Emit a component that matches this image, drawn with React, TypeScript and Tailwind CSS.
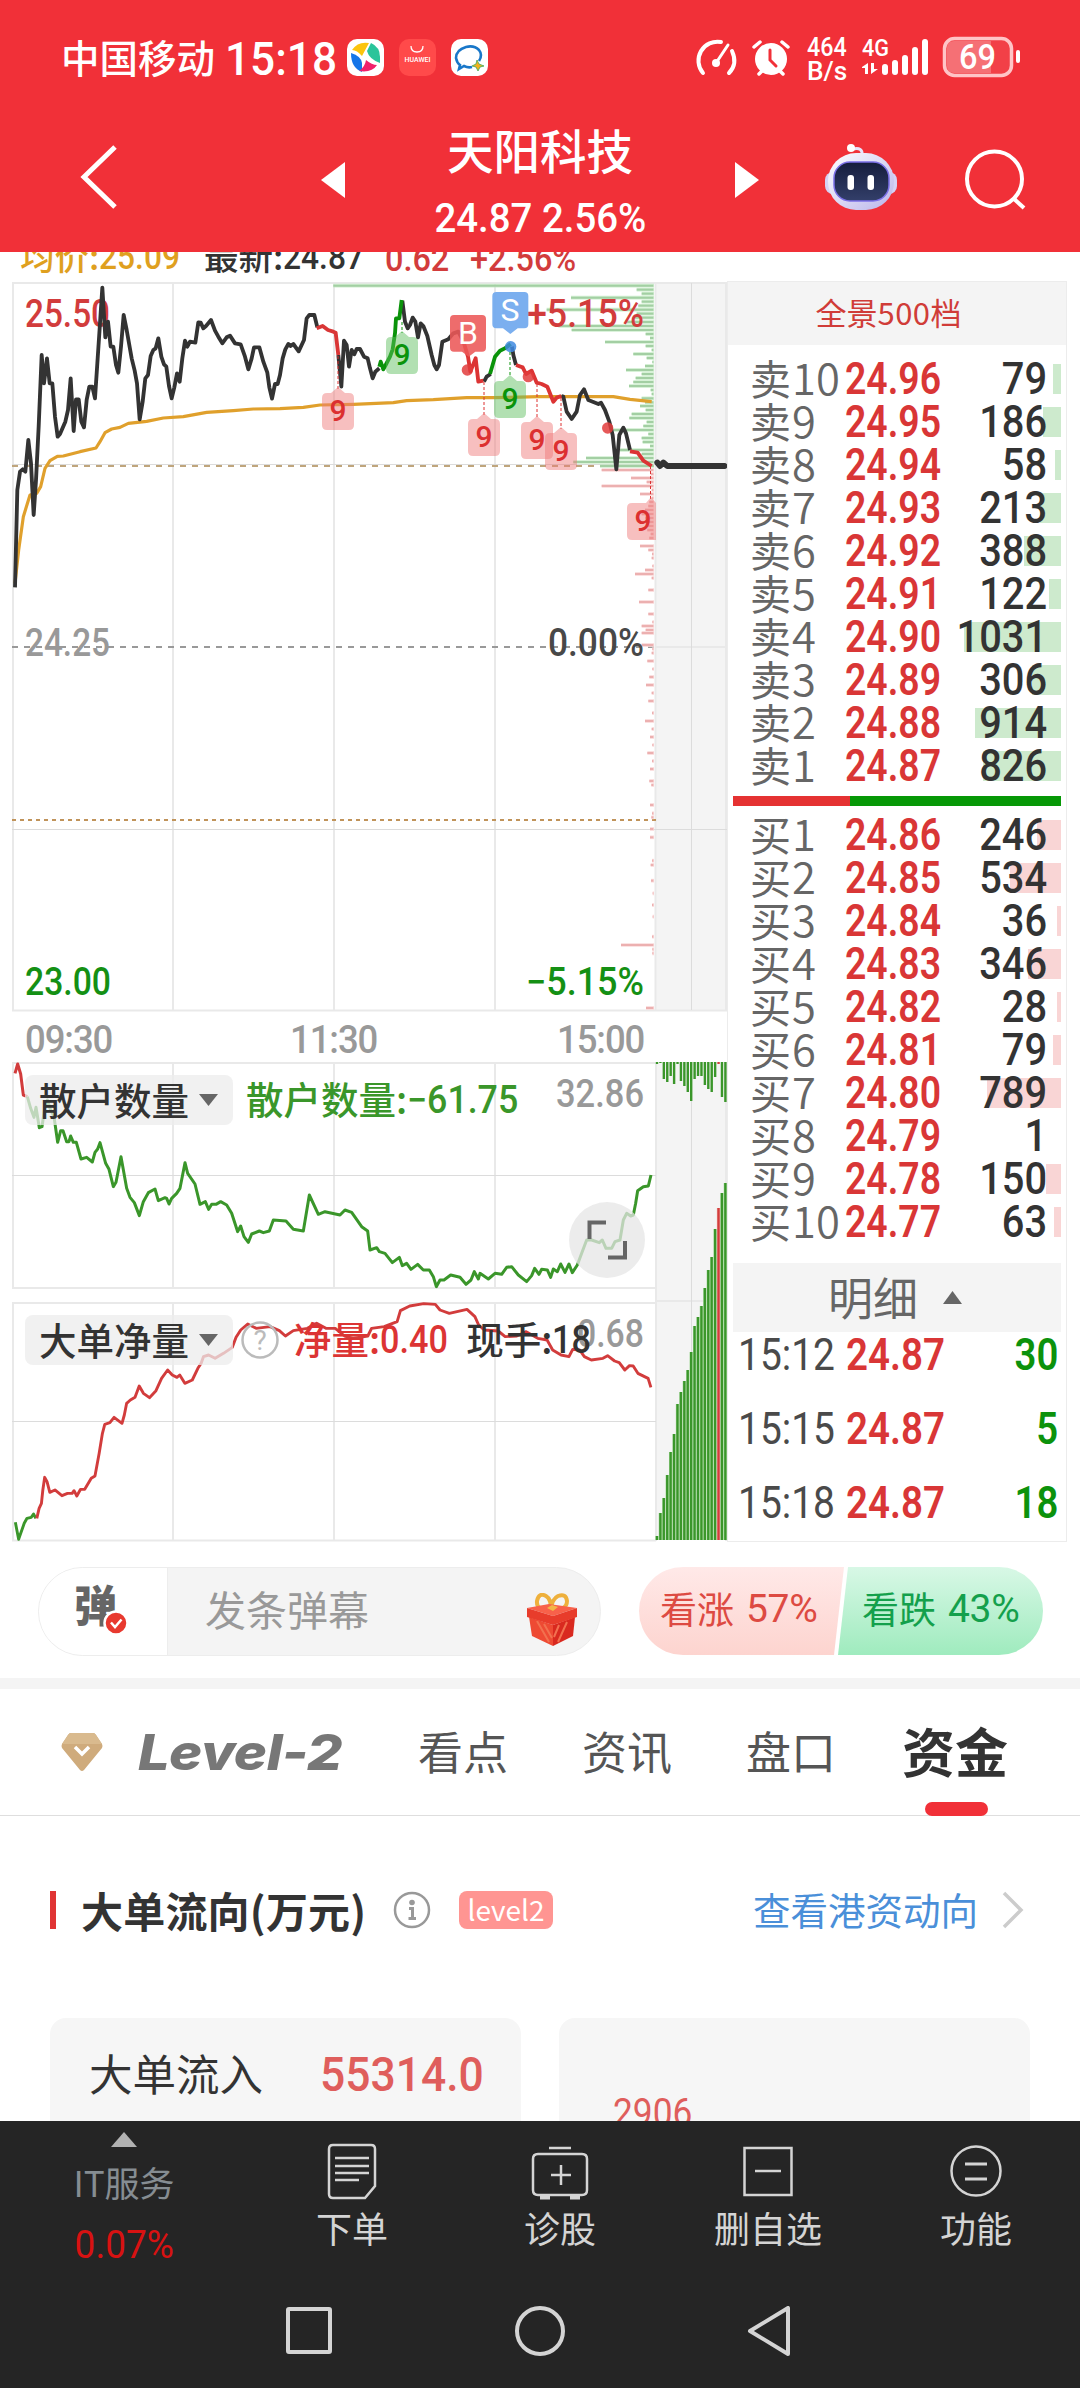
import type { ReactNode } from 'react'

const GREEN = '#3a962a'
const RED = '#d23c3c'

type Bar = [number, number]

type Level = {
  side: string
  rank: number
  price: string
  volume: number
}

const sells: Level[] = [
  { side: '卖', rank: 10, price: '24.96', volume: 79 },
  { side: '卖', rank: 9, price: '24.95', volume: 186 },
  { side: '卖', rank: 8, price: '24.94', volume: 58 },
  { side: '卖', rank: 7, price: '24.93', volume: 213 },
  { side: '卖', rank: 6, price: '24.92', volume: 388 },
  { side: '卖', rank: 5, price: '24.91', volume: 122 },
  { side: '卖', rank: 4, price: '24.90', volume: 1031 },
  { side: '卖', rank: 3, price: '24.89', volume: 306 },
  { side: '卖', rank: 2, price: '24.88', volume: 914 },
  { side: '卖', rank: 1, price: '24.87', volume: 826 },
]

const buys: Level[] = [
  { side: '买', rank: 1, price: '24.86', volume: 246 },
  { side: '买', rank: 2, price: '24.85', volume: 534 },
  { side: '买', rank: 3, price: '24.84', volume: 36 },
  { side: '买', rank: 4, price: '24.83', volume: 346 },
  { side: '买', rank: 5, price: '24.82', volume: 28 },
  { side: '买', rank: 6, price: '24.81', volume: 79 },
  { side: '买', rank: 7, price: '24.80', volume: 789 },
  { side: '买', rank: 8, price: '24.79', volume: 1 },
  { side: '买', rank: 9, price: '24.78', volume: 150 },
  { side: '买', rank: 10, price: '24.77', volume: 63 },
]

const ticks = [
  { time: '15:12', price: '24.87', volume: 30 },
  { time: '15:15', price: '24.87', volume: 5 },
  { time: '15:18', price: '24.87', volume: 18 },
]

// price distribution, [y, left edge]
const greenBars: Bar[] = [
  [107, -20], [119, 890], [131, 905], [143, 693], [155, 905], [167, 895], [179, 620], [191, 890], [203, 880], [216, 855],
  [228, 655], [240, 695], [252, 917], [264, 930], [276, 795], [288, 917], [300, 935], [312, 880], [324, 920], [336, 937],
  [348, 915], [360, 858], [372, 905], [384, 887], [396, 880], [408, 867], [420, 932], [432, 935], [445, 905], [457, 915],
  [468, 900], [480, 917], [492, 875], [504, 868], [516, 920], [528, 910], [540, 820], [552, 925], [564, 905], [576, 908],
  [588, 930], [600, 840], [612, 905], [624, 738], [636, 700], [648, 780],
]

const redBars: Bar[] = [
  [660, 785], [672, 932], [684, 873], [696, 920], [708, 785], [720, 935], [732, 900], [744, 935], [756, 928], [768, 925],
  [780, 915], [792, 905], [804, 915], [816, 927], [828, 925], [840, 922], [852, 932], [864, 928], [888, 900], [900, 925],
  [912, 936], [924, 935], [948, 937], [960, 915], [972, 885], [984, 935], [1020, 925], [1056, 897], [1092, 925],
  [1116, 937], [1128, 905], [1140, 917], [1149, 905], [1185, 905], [1197, 937], [1209, 935], [1233, 922], [1257, 937],
  [1281, 928], [1305, 918], [1329, 935], [1353, 925], [1389, 936], [1413, 915], [1437, 935], [1461, 930], [1485, 937],
  [1509, 922], [1533, 936], [1557, 930], [1593, 928], [1605, 934], [1665, 930], [1690, 936], [1702, 934], [1737, 930],
  [1762, 930], [1832, 936], [1845, 932], [1892, 933], [1930, 938], [1965, 936], [2000, 938], [2060, 936], [2085, 843],
  [2098, 937], [2110, 937], [2274, 918],
]

// after-hours bars hanging from the top, then the cumulative ones from the bottom
const downBars = [2, 1, 17, 20, 14, 22, 2, 19, 24, 30, 39, 17, 14, 14, 23, 27, 30, 15, 2, 35, 40]
const upBars = [1536, 1513, 1498, 1475, 1452, 1434, 1404, 1392, 1381, 1370, 1352, 1326, 1317, 1306, 1288, 1270, 1257, 1229, 1208, 1193, 1183]

function ChartText({ x, y, w, fill, children, size = 38 }: { x: number; y: number; w: number; fill: string; children: string; size?: number }) {
  return (
    <text x={x} y={y} textLength={w} lengthAdjust="spacingAndGlyphs" fill={fill} fontSize={size} fontWeight={500} fontFamily="Roboto, sans-serif">
      {children}
    </text>
  )
}

function Nine({ x, y, color, from }: { x: number; y: number; color: 'red' | 'green'; from: number }) {
  const fill = color === 'red' ? '#ee7a7a' : '#5fbf5f'
  const text = color === 'red' ? '#dc3030' : '#0a930a'
  return (
    <g>
      <path d={`M${x + 16} ${from}V${y - 4}`} stroke={text} strokeWidth={1} strokeDasharray="3 2" />
      <path
        d={`M${x + 5} ${y}h4l7-6 7 6h4q5 0 5 5v27q0 5-5 5h-22q-5 0-5-5v-27q0-5 5-5z`}
        fill={fill}
        fillOpacity={0.48}
      />
      <text x={x + 16} y={y + 28} textAnchor="middle" fontSize={30} fontWeight={500} fontFamily="Roboto, sans-serif" fill={text}>9</text>
    </g>
  )
}

function PriceChart() {
  return (
    <svg className="block" width="727" height="730" viewBox="0 282 727 730" fill="none">
      <rect x="656" y="283" width="70" height="727" fill="#f4f4f4" />
      <g stroke="#e9e9e9" strokeWidth="2">
        <path d="M12 283H727M12 1010.500H727M13 282V1011M173 282V1011M334 282V1011M495 282V1011M655.500 282V1011M726 282V1011" />
        <path d="M656 647H727" />
      </g>
      <path d="M12 464.500H656M12 829.500H727M691.500 283V1010" stroke="#dcdcdc" />
      <path d="M12 466H655" stroke="#bfa57c" strokeWidth="2" strokeDasharray="6 6" />
      <path d="M12 647H655" stroke="#999" strokeWidth="2" strokeDasharray="6 6" />
      <path d="M12 820H656" stroke="#c0935a" strokeWidth="2" strokeDasharray="4 4" />

      <g transform="translate(340 250) scale(0.33333)">
        {greenBars.map(([y, x]) => (
          <g key={y}>
            <path d={`M${x} ${y}H942`} stroke="#bfe8bf" strokeOpacity="0.75" strokeWidth="11" />
            <path d={`M${x} ${y}H940`} stroke="#a3cfa3" strokeWidth="6" />
          </g>
        ))}
        {redBars.map(([y, x]) => (
          <g key={y}>
            <path d={`M${x} ${y}H942`} stroke="#fadada" strokeWidth="11" />
            <path d={`M${x} ${y}H940`} stroke="#ecb0b0" strokeWidth="6" />
          </g>
        ))}
      </g>

      <ChartText x={25} y={327} w={85} fill="#d23c3c">25.50</ChartText>
      <ChartText x={25} y={656} w={85} fill="#999">24.25</ChartText>
      <ChartText x={25} y={995} w={86} fill="#149014">23.00</ChartText>
      <ChartText x={527} y={327} w={117} fill="#d23c3c">+5.15%</ChartText>
      <ChartText x={548} y={656} w={96} fill="#484848">0.00%</ChartText>
      <ChartText x={526} y={995} w={118} fill="#149014">−5.15%</ChartText>

      {/* morning session */}
      <g transform="translate(0 250) scale(0.33333)" strokeWidth="11.500" strokeLinejoin="round">
        <path
          d="M45 1000L56 900 70 800 90 735 110 730 122 710 135 655 150 632 172 619 190 618 240 605 288 594 300 575 315 548 335 537 360 532 385 520 440 514 490 504 550 500 620 487 700 482 760 477 840 476 910 472 960 465 1060 463 1180 458 1220 452 1300 449 1400 443 1480 443 1620 440 1840 440 1890 448 1955 455"
          stroke="#e0a02c"
          strokeWidth="9.500"
        />
        <path
          d="M45 1012L52 720 60 665 68 658 76 665 85 570 93 640 101 795 108 690 116 530 125 315 132 400 141 325 149 400 157 400 165 500 173 560 180 552 196 515 204 480 212 385 221 543 228 448 236 448 244 515 252 532 260 450 268 410 277 410 285 445 292 340 300 220 307 113 316 262 324 215 332 290 340 290 348 345 355 368 363 290 371 195 380 240 395 325 404 362 411 400 419 508 428 455 436 385 444 375 452 318 460 300 467 295 475 265 484 320 492 343 499 350 507 408 515 445 523 412 531 370 539 395 547 325 555 272 562 290 570 275 586 278 595 217 602 218 610 235 618 228 633 210 645 242 655 260 667 280 680 262 690 257 705 280 722 283 735 320 745 358 755 325 762 292 778 292 790 335 802 368 808 412 816 446 825 402 833 402 840 375 848 325 856 298 865 282 872 288 880 282 896 304 912 270 920 205 928 195 943 195 952 232"
          stroke="#333"
        />
        <path d="M1015 315L1024 410 1032 272 1040 285 1047 350 1055 300 1063 313 1070 297 1080 297 1092 320 1103 325 1110 355 1118 385 1126 365 1138 355" stroke="#333" />
        <path d="M950 235L968 228 984 240 1000 245 1007 248 1015 315" stroke="#d93636" />
      </g>

      {/* afternoon session */}
      <g transform="translate(340 250) scale(0.33333)" strokeWidth="11.500" strokeLinejoin="round">
        <path d="M187 152L195 215 203 235 210 225 218 203 226 215 234 262 242 220 250 228 262 258 275 315 283 345 290 358 297 345 307 275 325 268 340 250 355 245 368 270" stroke="#333" />
        <path d="M432 395L440 380 452 372M516 290L520 315 528 345M664 438L670 440 680 485 695 507 710 485 720 435 732 418 745 450 775 462 783 458 795 480 808 515 818 555 829 658 838 555 850 533 858 550 870 600" stroke="#333" />
        <path d="M118 350L122 335 130 358 137 345 150 320 158 298 165 250 168 205 178 205 185 150M450 372L465 320 480 302 495 295 512 282" stroke="#0a930a" />
        <path d="M372 280L384 320 391 365 407 325 415 395 430 392M528 345L548 352 558 372 575 362 590 398 605 402 622 410 640 455 650 443 664 438M870 604L893 608 910 632 935 648" stroke="#dc3434" />
        <circle cx="382" cy="360" r="17" fill="#e23c3c" fillOpacity="0.85" />
        <circle cx="565" cy="380" r="17" fill="#e23c3c" fillOpacity="0.85" />
        <circle cx="803" cy="534" r="17" fill="#e23c3c" fillOpacity="0.85" />
        <circle cx="512" cy="290" r="17" fill="#3f8ae0" fillOpacity="0.85" />
        <path d="M952 638L960 648 970 638 982 648H1153" stroke="#333" strokeWidth="18" strokeLinecap="round" />
        <path d="M342 195h84q12 0 12 12v86q0 12-12 12h-20l-20 15-20-15h-24q-12 0-12-12v-86q0-12 12-12z" fill="#ec5858" fillOpacity="0.88" />
        <path d="M469 126h84q12 0 12 12v85q0 12-12 12h-20l-22 17-22-17h-20q-12 0-12-12v-85q0-12 12-12z" fill="#74abee" fillOpacity="0.95" />
      </g>
      <text x="468" y="344" textAnchor="middle" fontSize="32" fontFamily="Roboto, sans-serif" fill="#fff">B</text>
      <text x="510" y="321" textAnchor="middle" fontSize="32" fontFamily="Roboto, sans-serif" fill="#fff">S</text>

      <Nine x={322} y={393} color="red" from={356} />
      <Nine x={386} y={337} color="green" from={322} />
      <Nine x={468} y={419} color="red" from={382} />
      <Nine x={494} y={381} color="green" from={352} />
      <Nine x={521} y={422} color="red" from={384} />
      <Nine x={545} y={433} color="red" from={398} />
      <path d="M650.500 466V500" stroke="#dc3030" strokeDasharray="3 2" />
      <path d="M632 503h14l5-6 5 6v37h-24q-5 0-5-5v-27q0-5 5-5z" fill="#ee7a7a" fillOpacity="0.48" />
      <text x="643" y="531" textAnchor="middle" fontSize="30" fontWeight="500" fontFamily="Roboto, sans-serif" fill="#dc3030">9</text>
    </svg>
  )
}

function IndicatorCharts() {
  return (
    <svg className="block" width="727" height="480" viewBox="0 1062 727 480" fill="none">
      <rect x="656" y="1062" width="70" height="478" fill="#f4f4f4" />
      <g stroke="#e9e9e9" strokeWidth="2">
        <path d="M12 1063H656M12 1288H656M13 1062V1289M173 1062V1289M334 1062V1289M495 1062V1289" />
        <path d="M12 1303H656M12 1540.500H656M13 1302V1541M173 1302V1541M334 1302V1541M495 1302V1541" />
        <path d="M656 1062V1541M726 1062V1541M656 1301H727" />
      </g>
      <path d="M12 1175.500H656M12 1421.500H656M691.500 1062V1540" stroke="#dcdcdc" />

      {downBars.map((h, i) => (
        <rect key={i} x={655.8 + i * 3.42} y="1062" width="2.400" height={h} fill={i === 18 ? RED : GREEN} />
      ))}
      {upBars.map((top, i) => (
        <g key={i}>
          <rect x={655.3 + i * 3.42} y={top} width="3.420" height={1540 - top} fill={i === 18 ? '#f0b0a8' : '#a9d9a0'} />
          <rect x={655.8 + i * 3.42} y={top} width="2.300" height={1540 - top} fill={i === 18 ? RED : GREEN} />
        </g>
      ))}

      <g transform="translate(0 780) scale(0.33333)" strokeWidth="9" strokeLinejoin="round">
        <path d="M45 880L53 852 62 882 70 945 82 950" stroke={RED} />
        <path
          d="M82 950L92 985 102 1012 108 982 118 1043 126 1040 134 985 142 960 150 985 162 1010 173 1087 182 1052 189 1052 200 1085 207 1085 212 1068 220 1087 229 1087 243 1137 260 1132 277 1146 285 1117 293 1107 300 1088 317 1150 327 1168 340 1220 348 1207 363 1130 380 1225 390 1252 403 1268 418 1307 430 1265 445 1238 465 1227 475 1262 495 1253 500 1255 507 1272 515 1255 530 1240 540 1225 555 1148 563 1180 585 1212 600 1273 616 1265 626 1288 635 1273 648 1273 662 1265 680 1275 695 1300 713 1355 722 1338 732 1370 745 1387 755 1362 778 1353 790 1358 808 1353 820 1320 858 1323 880 1348 910 1353 928 1245 955 1303 975 1295 1020 1305 1035 1290 1055 1297 1085 1340 1103 1353 1110 1410 1130 1403 1138 1415 1155 1420 1177 1448 1198 1432 1207 1457 1220 1450 1233 1468 1253 1453 1270 1470 1288 1470 1300 1490 1309 1520 1320 1500 1332 1500 1352 1485 1380 1492 1398 1513 1413 1500 1423 1475 1435 1497 1440 1480 1465 1497 1485 1480 1505 1483 1520 1462 1535 1460 1555 1485 1580 1505 1595 1487 1604 1465 1617 1483 1625 1468 1642 1470 1652 1492 1660 1467 1672 1475 1682 1452 1695 1477 1707 1452 1717 1478 1732 1455 1745 1420 1760 1380 1775 1380 1798 1388 1807 1380 1818 1405 1835 1405 1845 1385 1860 1380 1870 1320 1880 1300 1892 1308 1900 1305 1907 1270 1913 1232 1930 1220 1945 1218 1953 1185"
          stroke={GREEN}
        />
      </g>

      <g transform="translate(0 1260) scale(0.4656 0.33333)" strokeWidth="2.900" strokeLinejoin="round">
        <path vectorEffect="non-scaling-stroke" d="M33 787L40 838 52 790 58 775 67 772 72 762 77 775" stroke={GREEN} />
        <path
          vectorEffect="non-scaling-stroke"
          d="M79 775L84 745 89 730 92 690 96 652 101 665 107 697 118 690 133 707 145 700 155 700 159 692 165 708 173 688 182 688 196 655 204 648 213 580 220 520 225 493 236 488 245 472 262 490 267 465 272 430 280 420 290 412 299 378 308 400 321 413 335 392 347 355 360 330 370 345 380 352 386 345 397 370 413 360 425 325 432 310 437 290 448 285 462 295 480 280 499 262 507 232 517 210 532 192 550 205 580 200 600 212 613 228 630 212 660 205 680 190 700 205 720 205 740 228 758 235 790 228 798 205 825 200 853 185 860 152 880 138 910 131 935 133 945 150 965 160 1003 148 1020 170 1028 195 1040 210 1070 213 1085 230 1110 228 1130 215 1155 235 1175 240 1187 270 1205 285 1222 290 1230 268 1245 270 1255 290 1270 300 1295 295 1305 287 1320 303 1330 308 1342 330 1352 317 1360 318 1370 340 1392 355 1398 382"
          stroke={RED}
        />
      </g>

      <ChartText x={556} y={1107} w={88} fill="#999">32.86</ChartText>
      <ChartText x={577} y={1347} w={67} fill="#999">0.68</ChartText>

      <circle cx="607" cy="1240" r="38" fill="#e6e6e6" fillOpacity="0.75" />
      <path d="M589.500 1239V1222.500H606M625 1241V1257.500H608" stroke="#666" strokeWidth="4" />
    </svg>
  )
}

function IndicatorButton({ children }: { children: ReactNode }) {
  return (
    <div className="flex h-[50px] w-[208px] items-center rounded-lg bg-[#ececec]/75 pl-3.5 text-[37.5px] font-medium text-[#333]">
      <span className="-mt-[3px]">{children}</span>
      <svg className="ml-2.5" width="19" height="12" viewBox="0 0 19 12"><path d="M0 0h19l-9.500 12z" fill="#666" /></svg>
    </div>
  )
}

function Charts() {
  return (
    <div className="w-[727px] shrink-0 pt-px">
      <PriceChart />
      <div className="flex h-[50px] items-center pl-[25px] pt-[5px] font-[Roboto] text-[38px] leading-none text-[#999]">
        <span className="w-[265px] origin-left scale-x-[0.96] font-medium tracking-[-1.1px]">09:30</span>
        <span className="w-[267px] origin-left scale-x-[0.96] font-medium tracking-[-1.1px]">11:30</span>
        <span className="origin-left scale-x-[0.96] font-medium tracking-[-1.1px]">15:00</span>
      </div>
      <div className="relative">
        <IndicatorCharts />
        <div className="absolute left-[25px] top-[13px] flex items-center whitespace-nowrap leading-none">
          <IndicatorButton>散户数量</IndicatorButton>
          <span className="-mt-[5px] ml-[13px] text-[37.5px] font-medium text-[#3a962a]">散户数量:</span>
          <span className="origin-left scale-x-[0.94] font-[Roboto] text-[38px] font-medium text-[#3a962a]">−61.75</span>
        </div>
        <div className="absolute left-[25px] top-[253px] flex items-center whitespace-nowrap leading-none">
          <IndicatorButton>大单净量</IndicatorButton>
          <svg className="ml-[7px]" width="40" height="40" viewBox="0 0 40 40">
            <circle cx="20" cy="20" r="17.500" fill="none" stroke="#bbb" strokeWidth="2.500" />
            <text x="20" y="30" textAnchor="middle" fontSize="28" fontFamily="Roboto, sans-serif" fill="#bbb">?</text>
          </svg>
          <span className="-mt-[4px] ml-[14px] text-[37.5px] font-medium text-[#dc3434]">净量:</span>
          <span className="w-[86px] origin-left scale-x-[0.9] font-[Roboto] text-[38px] font-medium text-[#dc3434]">0.40</span>
          <span className="-mt-[4px] text-[37.5px] font-medium text-[#333]">现手:</span>
          <span className="origin-left scale-x-[0.9] font-[Roboto] text-[38px] font-medium text-[#333]">18</span>
        </div>
      </div>
    </div>
  )
}

function LevelRow({ level }: { level: Level }) {
  return (
    <div className="relative flex h-[43px] items-center whitespace-nowrap leading-none">
      <div
        className={level.side === '卖' ? 'absolute right-[5px] top-[7px] h-[30px] bg-[#cdeacd]' : 'absolute right-[5px] top-[7px] h-[30px] bg-[#f9d5d5]'}
        style={{ width: level.volume < 10 ? 0 : (level.volume / 1031) * 96 + 1 }}
      />
      <span className="-mt-[3px] flex w-[95px] items-center text-[41px] text-[#666]">
        {level.side}
        <span className="ml-px text-[43.500px] font-[350]">{level.rank}</span>
      </span>
      <span className="mt-px w-[97px] origin-left scale-x-[0.85] font-[Roboto] text-[44px] font-semibold text-[#d93636]">{level.price}</span>
      <span className="relative ml-auto mr-[19px] mt-px origin-right scale-x-[0.905] font-[Roboto] text-[44px] font-medium text-[#333]">{level.volume}</span>
    </div>
  )
}

function OrderBook() {
  return (
    <div className="h-[1261px] w-[340px] border border-[#ececec]">
      <div className="flex h-[63px] items-center justify-center bg-[#f4f4f4] pb-[4px] pr-[17px] text-[31px] leading-none text-[#d03c38]">
        全景<span className="tracking-[0.5px]">500</span>档
      </div>
      <div className="pl-[22px] pt-[12px]">
        {sells.map(level => <LevelRow key={level.rank} level={level} />)}
      </div>
      <div className="mx-[5px] mt-[9px] flex h-2.5">
        <div className="w-[117px] bg-[#e53232]" />
        <div className="flex-1 bg-[#069806]" />
      </div>
      <div className="pl-[22px] pt-[7px]">
        {buys.map(level => <LevelRow key={level.rank} level={level} />)}
      </div>
      <div className="mx-[5px] mt-5 flex h-[69px] items-center bg-[#f4f4f4] pl-[95px] text-[45px] leading-none text-[#666]">
        <span className="-mt-[2px]">明细</span>
        <svg className="ml-[25px]" width="19" height="13" viewBox="0 0 19 13"><path d="M9.500 0L19 13H0z" fill="#666" /></svg>
      </div>
      <div className="flex flex-col gap-8 pl-2.5 pr-2 pt-[2px]">
        {ticks.map(tick => (
          <div key={tick.time} className="flex h-[42px] items-center font-[Roboto] text-[44px] leading-none">
            <span className="w-[108px] origin-left scale-x-[0.885] text-[#4a4a4a]">{tick.time}</span>
            <span className="origin-left scale-x-[0.875] font-semibold text-[#d93636]">{tick.price}</span>
            <span className="ml-auto origin-right scale-x-[0.87] font-semibold text-[#0c920c]">{tick.volume}</span>
          </div>
        ))}
      </div>
    </div>
  )
}

function StatusBar() {
  return (
    <div className="flex h-[115px] items-center whitespace-nowrap pl-[61px] leading-none">
      <span className="-mt-[2px] text-[38.5px] font-medium">中国移动</span>
      <span className="ml-[10px] mt-[3px] w-[122px] origin-left scale-x-[0.96] font-[Roboto] text-[46px] font-medium">15:18</span>
      <svg width="141" height="37" viewBox="0 0 141 37">
        <rect width="37" height="37" rx="10" fill="#fff" />
        <path d="M5 11Q11 2 22 4L15 17Q10 11 5 11z" fill="#fcc40d" />
        <path d="M24 4Q33 8 33 18L33 24Q22 20 20 12z" fill="#2bc49a" />
        <path d="M4 14Q14 17 15 24L15 33Q4 29 4 14z" fill="#1575e8" />
        <path d="M30 26Q25 34 12 32Q18 28 19 21Q25 26 30 26z" fill="#f0206a" />
        <rect x="52" width="37" height="37" rx="10" fill="#ff4a4a" />
        <path d="M64 7q0 6 6 6t6-6" fill="none" stroke="#fff" strokeWidth="1.300" />
        <text x="70.500" y="23" textAnchor="middle" fontSize="7" fontWeight="500" fontFamily="Roboto, sans-serif" fill="#fff">HUAWEI</text>
        <rect x="104" width="37" height="37" rx="10" fill="#fff" />
        <path d="M132 22Q136 16 132 11Q127 6 119 8Q109 11 109 19Q110 24 113 26L112 30L117 27Q121 29 125 28" fill="none" stroke="#1977c9" strokeWidth="2.600" />
        <path d="M130 21l2 4 5 2-4 1-2 4-2-4-4-1 4-2z" fill="#f2b01c" stroke="#3aa85a" strokeWidth="0.800" />
      </svg>
      <svg className="ml-[206px]" width="96" height="40" viewBox="0 0 96 40" fill="none" stroke="#fff" strokeWidth="4" strokeLinecap="round">
        <path d="M9 35A19 19 0 0 1 27 4M38 13Q44 26 35 35" />
        <path d="M34 7L22 25" strokeWidth="3" />
        <circle cx="22" cy="25" r="4" fill="#fff" stroke="none" />
        <circle cx="77" cy="21" r="16" fill="#fff" stroke="none" />
        <path d="M60 9L66 4M88 4L94 9M65 36L68 33M89 36L86 33" strokeWidth="3.500" />
        <path d="M76 12V22L82 28" stroke="#f13038" strokeWidth="3" />
      </svg>
      <div className="ml-[17px] mt-[4px] flex w-[55px] flex-col items-start font-[Roboto] text-[25px] font-medium leading-[24px]">
        <span className="origin-left scale-x-[0.93]">464</span>
        <span className="origin-left scale-x-[1.05]">B/s</span>
      </div>
      <svg width="160" height="44" viewBox="0 0 160 44" fill="#fff">
        <text x="0" y="20" fontSize="24" fontWeight="500" textLength="27" lengthAdjust="spacingAndGlyphs" fontFamily="Roboto, sans-serif">4G</text>
        <path d="M0 31l6-4v11H3v-6H0zM9 27h3v6h4l-7 5z" />
        <rect x="20" y="28" width="6" height="11" rx="3" />
        <rect x="30" y="24" width="6" height="15" rx="3" />
        <rect x="40" y="19" width="6" height="20" rx="3" />
        <rect x="50" y="11" width="6" height="28" rx="3" />
        <rect x="60" y="3" width="6" height="36" rx="3" />
        <rect x="82.500" y="2.500" width="67" height="37" rx="10" fill="#fff" fillOpacity="0.08" stroke="#ffc4c6" strokeWidth="3.500" />
        <path d="M92 5H129V37H92Q85 37 85 30V12Q85 5 92 5z" fillOpacity="0.25" />
        <rect x="154" y="14" width="4" height="13" rx="2" />
        <text x="97" y="33" textLength="37" lengthAdjust="spacingAndGlyphs" fontSize="35" fontWeight="500" fontFamily="Roboto, sans-serif">69</text>
      </svg>
    </div>
  )
}

function Header() {
  return (
    <header className="h-[252px] bg-[#f13038] text-white">
      <StatusBar />
      <div className="flex h-[137px]">
        <svg width="430" height="137" viewBox="0 115 430 137">
          <path d="M115 147L84 177L115 207" fill="none" stroke="#fff" strokeWidth="5" />
          <path d="M345 162V198L321 180z" fill="#fff" />
        </svg>
        <div className="flex w-[220px] flex-col items-center whitespace-nowrap leading-none">
          <span className="mt-[11px] text-[46.5px] font-medium">天阳科技</span>
          <span className="mt-[26px] scale-x-[0.96] font-[Roboto] text-[40px] font-medium">24.87 2.56%</span>
        </div>
        <svg width="430" height="137" viewBox="650 115 430 137">
          <defs>
            <linearGradient id="bot" x1="0" y1="0" x2="1" y2="1">
              <stop offset="0" stopColor="#fff" />
              <stop offset="1" stopColor="#b9b4ea" />
            </linearGradient>
            <linearGradient id="face" x1="0" y1="0" x2="0" y2="1">
              <stop offset="0" stopColor="#151d3c" />
              <stop offset="1" stopColor="#333f6a" />
            </linearGradient>
          </defs>
          <path d="M735 162V198L759 180z" fill="#fff" />
          <path d="M862 155Q863 147 853 149" fill="none" stroke="#e8e4fb" strokeWidth="3" />
          <circle cx="851" cy="148" r="4" fill="#fff" />
          <rect x="825" y="172" width="72" height="22" rx="8" fill="#d6d2f5" />
          <rect x="828" y="153" width="66" height="57" rx="28" fill="url(#bot)" />
          <rect x="834" y="162" width="55" height="39" rx="16" fill="url(#face)" stroke="#7a6fe6" strokeWidth="1.500" />
          <rect x="847.500" y="175" width="6.500" height="15" rx="3" fill="#fff" />
          <rect x="867.500" y="175" width="6.500" height="15" rx="3" fill="#fff" />
          <circle cx="994.500" cy="179" r="27.500" fill="none" stroke="#fff" strokeWidth="4" />
          <path d="M1013 198L1024 208" stroke="#fff" strokeWidth="4" />
        </svg>
      </div>
    </header>
  )
}

function Gift() {
  return (
    <svg width="52" height="54" viewBox="0 0 52 54">
      <path d="M25 16Q10 18 11 8Q13 -1 20 3Q25 6 25 16Q26 6 32 3Q40 0 41 8Q41 18 25 16z" fill="none" stroke="#eeb03c" strokeWidth="4" />
      <path d="M3 24L27 32V53L6 43z" fill="#ee4a33" />
      <path d="M49 24L27 32V53L47 43z" fill="#d9291f" />
      <path d="M11 28l12 21M18 31l8 14M33 32l-5 12M41 29l-9 20" stroke="#f2704f" strokeWidth="2" />
      <path d="M1 15L23 11L51 15L27 23z" fill="#f8614a" />
      <path d="M1 15L27 23V32L1 24zM51 15L27 23V32L51 24z" fill="#e83c2b" />
      <path d="M21 15l5-3 6 2-5 4z" fill="#f3b548" />
    </svg>
  )
}

function DanmuBar() {
  return (
    <div className="flex h-[136px] items-start whitespace-nowrap pl-[38px] pt-[25px] leading-none">
      <div className="flex h-[89px] w-[563px] overflow-hidden rounded-full border border-[#ededed] bg-[#f4f4f4]">
        <div className="relative w-[129px] border-r border-[#ededed] bg-white pl-[35px] pt-[14px] text-[43px] font-black text-[#666]">
          弹
          <svg className="absolute left-[64px] top-[42px]" width="26" height="26" viewBox="0 0 26 26">
            <circle cx="13" cy="13" r="11.500" fill="#e8392f" stroke="#fff" strokeWidth="2.500" />
            <path d="M8 12.500L12 17L18.500 9.500" fill="none" stroke="#fff" strokeWidth="2.500" />
          </svg>
        </div>
        <span className="pl-[37px] pt-[20px] text-[41px] text-[#999]">发条弹幕</span>
        <div className="ml-auto mr-[22px] pt-[25px]"><Gift /></div>
      </div>
      <div className="relative ml-[38px] flex h-[88px] w-[404px]">
        <svg className="absolute inset-0" width="404" height="88" viewBox="0 0 404 88">
          <defs>
            <linearGradient id="up" x1="0" y1="0" x2="0" y2="1">
              <stop offset="0" stopColor="#ffe9e8" />
              <stop offset="1" stopColor="#fdd4cf" />
            </linearGradient>
            <linearGradient id="down" x1="0" y1="0" x2="0" y2="1">
              <stop offset="0" stopColor="#d8f8e6" />
              <stop offset="1" stopColor="#9febbe" />
            </linearGradient>
          </defs>
          <path d="M44 0H205L195 88H44A44 44 0 0 1 44 0z" fill="url(#up)" />
          <path d="M209 0H360A44 44 0 0 1 360 88H199z" fill="url(#down)" />
        </svg>
        <span className="relative flex w-[202px] items-center pb-1 pl-[21px] text-[37px] text-[#dd4a42]">
          <span className="-mt-[2px]">看涨</span>
          <span className="ml-3 origin-left font-[Roboto] text-[39px] tracking-[-0.3px]">57%</span>
        </span>
        <span className="relative flex items-center pb-1 pl-[21px] text-[37px] text-[#14a04c]">
          <span className="-mt-[2px]">看跌</span>
          <span className="ml-3 origin-left font-[Roboto] text-[39px] tracking-[-0.3px]">43%</span>
        </span>
      </div>
    </div>
  )
}

function Tabs() {
  return (
    <div className="flex h-[127px] items-center whitespace-nowrap border-b border-[#dedede] pl-[60px] text-[45px] leading-none text-[#555]">
      <svg width="44" height="40" viewBox="0 0 44 40">
        <path d="M11 1H33Q35 1 36 3L42 12Q43 14 42 16L24 38Q22 40 20 38L2 16Q1 14 2 12L8 3Q9 1 11 1z" fill="#cfab7c" />
        <path d="M2 12L8 3Q9 1 11 1H33Q35 1 36 3L42 12z" fill="#d9ba8e" />
        <path d="M15 15L22 22L29 15" fill="none" stroke="#fff" strokeWidth="3.500" />
      </svg>
      <span className="ml-[34px] w-[280px] origin-left scale-x-[1.12] font-[Inter] text-[50px] font-extrabold italic tracking-[-0.5px] text-[#777]">Level-2</span>
      <span className="-mt-[3px] w-[164px]">看点</span>
      <span className="-mt-[3px] w-[164px]">资讯</span>
      <span className="-mt-[3px] w-[156px]">盘口</span>
      <span className="relative flex h-full items-center pb-[3px] text-[53px] font-bold text-[#333]">
        资金
        <span className="absolute bottom-[-1px] left-[23px] h-3.5 w-[63px] rounded-full bg-[#f13038]" />
      </span>
    </div>
  )
}

function FlowSection() {
  return (
    <section className="h-[305px] overflow-hidden px-[50px] pt-[75px] leading-none">
      <div className="flex h-[38px] items-center whitespace-nowrap">
        <div className="h-[38px] w-1.5 bg-[#e03434]" />
        <span className="-mt-px ml-[25px] w-[287px] text-[42px] font-bold tracking-[0.2px] text-[#333]">大单流向(万元)</span>
        <svg className="ml-[25px]" width="38" height="38" viewBox="0 0 38 38" fill="none" stroke="#999">
          <circle cx="19" cy="19" r="17" strokeWidth="2.500" />
          <circle cx="19" cy="11.500" r="2.800" fill="#999" stroke="none" />
          <path d="M16 17.500H19.500V27M15.500 27.500H23" strokeWidth="3" />
        </svg>
        <span className="ml-[28px] flex h-[38px] w-[94px] items-center justify-center rounded-lg bg-[#ff9592] text-[28px] text-white">
          <span className="-mt-[3px]">level2</span>
        </span>
        <span className="-mt-[2px] ml-auto text-[37.5px] text-[#4a8fd9]">查看港资动向</span>
        <svg className="ml-[24px] mr-1.5" width="22" height="38" viewBox="0 0 22 38"><path d="M2 2L19 19L2 36" fill="none" stroke="#ccc" strokeWidth="3.500" /></svg>
      </div>
      <div className="mt-[89px] flex gap-[38px]">
        <div className="flex h-[160px] w-[471px] whitespace-nowrap rounded-2xl bg-[#f6f6f6] pl-[39px] pt-[33px]">
          <span className="w-[231px] text-[43.500px] text-[#333]">大单流入</span>
          <span className="origin-left scale-x-[0.925] font-[Roboto] text-[48px] font-medium text-[#df5e5c]">55314.0</span>
        </div>
        <div className="h-[160px] w-[471px] rounded-2xl bg-[#f6f6f6] pl-[54px] pt-[76px]">
          <span className="inline-block origin-left scale-x-[0.93] font-[Roboto] text-[38px] text-[#df5e5c]">2906</span>
        </div>
      </div>
    </section>
  )
}

function NavItem({ label, children }: { label: string; children: ReactNode }) {
  return (
    <div className="flex w-[208px] flex-col items-center pt-[19px]">
      <svg width="62" height="62" viewBox="0 0 62 62" fill="none" stroke="#d4d4d4" strokeWidth="2.500">
        {children}
      </svg>
      <span className="mt-[7px] text-[36px] text-[#d4d4d4]">{label}</span>
    </div>
  )
}

function BottomNav() {
  return (
    <nav className="h-[267px] bg-[#252525] leading-none">
      <div className="flex h-[150px]">
        <div className="flex w-[248px] flex-col items-center pt-[11px]">
          <svg width="26" height="15" viewBox="0 0 26 15"><path d="M13 0L26 15H0z" fill="#b2b2b2" /></svg>
          <span className="mt-[17px] text-[35px] text-[#868d92]">IT服务</span>
          <span className="mt-[27px] scale-x-[0.95] font-[Roboto] text-[39px] text-[#d81212]">0.07%</span>
        </div>
        <NavItem label="下单">
          <path d="M12 5H50Q54 5 54 9V46L44 58H12Q8 58 8 54V9Q8 5 12 5zM14 18H48M14 26H48M14 33H48M14 40H38" />
        </NavItem>
        <NavItem label="诊股">
          <path d="M9 14H53Q58 14 58 19V50Q58 55 53 55H9Q4 55 4 50V19Q4 14 9 14z" />
          <path d="M20 8H42M22 35H42M32 25V45" />
          <path d="M11 57.500H21M41 57.500H51" strokeWidth="4" />
        </NavItem>
        <NavItem label="删自选">
          <path d="M7.500 8H54.500V55H7.500zM18 31H44" />
        </NavItem>
        <NavItem label="功能">
          <circle cx="31" cy="31" r="24.500" />
          <path d="M20 24H42M20 39H42" strokeWidth="3" />
        </NavItem>
      </div>
      <div className="flex h-[117px] justify-center pt-[35px]">
        <svg width="520" height="50" viewBox="280 2306 520 50" fill="none" stroke="#d4d4d4" strokeWidth="4" strokeLinejoin="round">
          <rect x="288" y="2309" width="42" height="43" rx="1" />
          <circle cx="540" cy="2331" r="23" />
          <path d="M788 2308V2354L750 2331z" />
        </svg>
      </div>
    </nav>
  )
}

export default function App() {
  return (
    <div className="h-[2388px] w-[1080px] overflow-hidden bg-white font-['Noto_Sans_CJK_SC',sans-serif]">
      <Header />
      <div className="flex h-[29px] items-end overflow-hidden whitespace-nowrap pl-[20px] text-[34.500px] font-medium leading-none">
        <span className="mb-[7px] flex w-[184px] items-center text-[#dfa01f]">均价:<span className="mt-1 origin-left scale-x-[0.92] font-[Roboto]">25.09</span></span>
        <span className="mb-[7px] flex w-[181px] items-center text-[#333]">最新:<span className="mt-1 origin-left scale-x-[0.92] font-[Roboto]">24.87</span></span>
        <span className="mb-[5px] w-[85px] origin-left scale-x-[0.94] font-[Roboto] text-[#d23c3c]">0.62</span>
        <span className="mb-[5px] origin-left scale-x-[0.94] font-[Roboto] text-[#d23c3c]">+2.56%</span>
      </div>
      <div className="flex h-[1261px]">
        <Charts />
        <OrderBook />
      </div>
      <DanmuBar />
      <div className="h-[11px] bg-[#f4f4f4]" />
      <Tabs />
      <FlowSection />
      <BottomNav />
    </div>
  )
}
